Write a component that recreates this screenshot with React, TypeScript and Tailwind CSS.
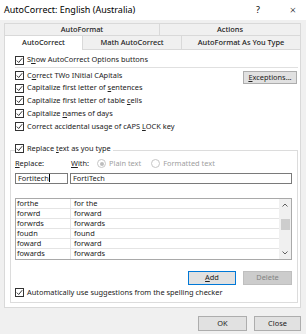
import type { FC, ReactNode } from 'react';

const rows: [string, string][] = [
  ['forthe', 'for the'],
  ['forwrd', 'forward'],
  ['forwrds', 'forwards'],
  ['foudn', 'found'],
  ['foward', 'forward'],
  ['fowards', 'forwards'],
];

const Check: FC = () => (
  <span className="flex h-[9px] w-[9px] shrink-0 items-center justify-center border border-[#333] bg-white">
    <svg width="7" height="7" viewBox="0 0 7 7">
      <path d="M0.8 3.6 L2.7 5.5 L6.2 1.2" stroke="#222" strokeWidth="0.9" fill="none" />
    </svg>
  </span>
);

const CheckRow: FC<{ children: ReactNode; className?: string }> = ({ children, className = '' }) => (
  <div className={`flex items-center gap-[3px] ${className}`}>
    <Check />
    <span className="whitespace-nowrap">{children}</span>
  </div>
);

const Radio: FC<{ on?: boolean }> = ({ on }) => (
  <span className="flex h-[9px] w-[9px] items-center justify-center rounded-full border border-[#c6c6c6] bg-white">
    {on && <span className="h-[4px] w-[4px] rounded-full bg-[#bdbdbd]" />}
  </span>
);

export default function App() {
  return (
    <div
      className="flex h-[334px] w-[306px] flex-col bg-[#f0f0f0] text-[7.4px] text-[#222]"
      style={{ fontFamily: '"Noto Sans", "Open Sans", sans-serif' }}
    >
      {/* title bar */}
      <div className="flex h-[20px] items-center bg-white pl-[4px] text-[9px] text-black">
        <span>AutoCorrect: English (Australia)</span>
        <span className="ml-auto w-[12px] text-center">?</span>
        <span className="ml-[23px] mr-[7px] w-[12px] text-center text-[11px] font-light">×</span>
      </div>

      {/* tabs */}
      <div className="mt-[3px] flex h-[12px] pl-[4px] pr-[5px]">
        <div className="flex w-[156px] items-center justify-center border border-b-0 border-[#d9d9d9] font-medium">AutoFormat</div>
        <div className="flex flex-1 items-center justify-center border border-b-0 border-l-0 border-[#d9d9d9] font-medium">Actions</div>
      </div>
      <div className="flex h-[15px] pl-[4px] pr-[5px]">
        <div className="z-10 flex w-[79px] items-center justify-center border border-b-0 border-[#d9d9d9] bg-white font-medium">AutoCorrect</div>
        <div className="flex w-[99px] items-center justify-center border border-b-0 border-l-0 border-[#d9d9d9] font-medium">Math AutoCorrect</div>
        <div className="flex flex-1 items-center justify-center border border-b-0 border-l-0 border-[#d9d9d9] font-medium">AutoFormat As You Type</div>
      </div>

      {/* panel */}
      <div className="-mt-px ml-[4px] mr-[5px] flex h-[259px] flex-col border border-[#d9d9d9] bg-white pt-[4px]">
        <div className="pl-[10px] pr-[2px]">
          <CheckRow className="h-[12px]">
            S<u>h</u>ow AutoCorrect Options buttons
          </CheckRow>
          <div className="mt-[1px] h-px bg-[#e0e0e0]" />
          <div className="mt-[1px] flex">
            <div className="flex flex-col">
              <CheckRow className="h-[12.7px]">
                C<u>o</u>rrect TWo INitial CApitals
              </CheckRow>
              <CheckRow className="h-[12.7px]">
                Capitalize first letter of <u>s</u>entences
              </CheckRow>
              <CheckRow className="h-[12.7px]">
                Capitalize first letter of table <u>c</u>ells
              </CheckRow>
              <CheckRow className="h-[12.7px]">
                Capitalize <u>n</u>ames of days
              </CheckRow>
              <CheckRow className="h-[12.7px]">
                Correct accidental usage of cAPS <u>L</u>OCK key
              </CheckRow>
            </div>
            <button className="ml-auto mr-[1px] mt-[2px] flex h-[13px] w-[54px] items-center justify-center border border-[#adadad] bg-[#e1e1e1]">
              <u>E</u>xceptions...
            </button>
          </div>
        </div>

        {/* replace group */}
        <div className="ml-[5px] mt-[17.5px] flex w-[288px] flex-col border border-[#dcdcdc] pb-[3px] pl-[4px] pr-[5px]">
          <div className="-mt-[8px] flex h-[12px]">
            <CheckRow className="bg-white pr-[2px]">
              Replace <u>t</u>ext as you type
            </CheckRow>
          </div>
          <div className="mt-[3px] flex h-[12px] items-center">
            <span className="w-[56px]">
              <u>R</u>eplace:
            </span>
            <span className="w-[26px]">
              <u>W</u>ith:
            </span>
            <Radio on />
            <span className="ml-[3px] text-[#a0a0a0]">Plain text</span>
            <span className="ml-[10px]">
              <Radio />
            </span>
            <span className="ml-[3px] text-[#a0a0a0]">Formatted text</span>
          </div>
          <div className="mt-[3px] flex h-[11px] gap-[2px]">
            <div className="flex w-[53px] items-center border border-[#7a7a7a] pl-[2px]">
              Fortitech<span className="h-[8px] w-px bg-black" />
            </div>
            <div className="flex flex-1 items-center border border-[#7a7a7a] pl-[2px]">FortiTech</div>
          </div>
          <div className="mt-[14px] flex h-[62px] border border-[#a9a9a9]">
            <div className="flex flex-1 flex-col">
              {rows.map(([a, b]) => (
                <div key={a} className="flex h-[10px] border-b border-[#e4e4e4] last:border-b-0">
                  <span className="flex w-[55px] items-center border-r border-[#e4e4e4] pl-[1px]">{a}</span>
                  <span className="flex items-center pl-[3px]">{b}</span>
                </div>
              ))}
            </div>
            <div className="flex w-[12px] flex-col items-center bg-[#f0f0f0]">
              <svg className="mt-[4px]" width="6" height="4" viewBox="0 0 6 4">
                <path d="M0.5 3.5 L3 1 L5.5 3.5" stroke="#606060" strokeWidth="1" fill="none" />
              </svg>
              <div className="mt-[12px] h-[11px] w-[9px] bg-[#cdcdcd]" />
              <svg className="mt-auto mb-[4px]" width="6" height="4" viewBox="0 0 6 4">
                <path d="M0.5 0.5 L3 3 L5.5 0.5" stroke="#606060" strokeWidth="1" fill="none" />
              </svg>
            </div>
          </div>
          <div className="mt-[11px] flex h-[14px] justify-end gap-[7px]">
            <button className="flex w-[48px] items-center justify-center border border-[#0078d7] bg-[#e1e1e1]">
              <u>A</u>dd
            </button>
            <button className="flex w-[49px] items-center justify-center border border-[#bfbfbf] bg-[#cccccc] text-[#838383]">
              Delete
            </button>
          </div>
          <CheckRow className="mt-[2px] h-[12px]">Automatically use suggestions from the spelling checker</CheckRow>
        </div>
      </div>

      {/* bottom buttons */}
      <div className="mt-[8px] flex h-[15px] justify-end gap-[7px] pr-[5px]">
        <button className="flex w-[49px] items-center justify-center border border-[#adadad] bg-[#e1e1e1]">OK</button>
        <button className="flex w-[47px] items-center justify-center border border-[#adadad] bg-[#e1e1e1]">Close</button>
      </div>
    </div>
  );
}
